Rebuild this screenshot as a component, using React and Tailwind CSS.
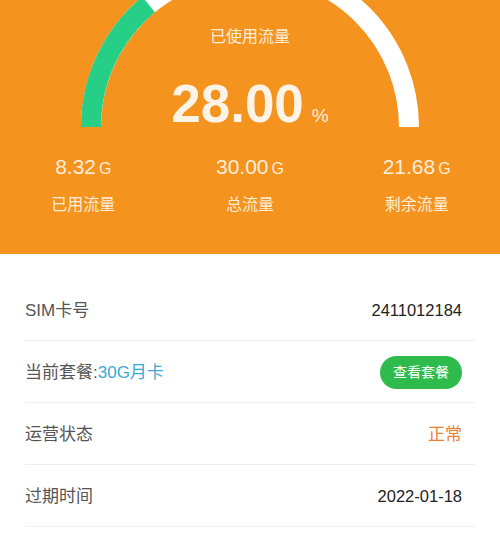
export default function App() {
  const font = { fontFamily: '"Liberation Sans", "Noto Sans CJK SC", sans-serif' };

  // gauge: centre (250,127), r 159, 28% of a half circle
  const pct = 28;
  const a = (pct / 100) * Math.PI;
  const gx = 250 - 159 * Math.cos(a);
  const gy = 127 - 159 * Math.sin(a);

  const stats = [
    { v: "8.32", l: "已用流量" },
    { v: "30.00", l: "总流量" },
    { v: "21.68", l: "剩余流量" },
  ];

  return (
    <div className="w-[500px] min-h-[533px] bg-white" style={font}>
      <div className="relative h-[254px] bg-[#F5931F] overflow-hidden text-[#FCEEDB]">
        <svg className="absolute left-0 top-0" width="500" height="140" viewBox="0 0 500 140">
          <path d="M 91 127 A 159 159 0 0 1 409 127" fill="none" stroke="#FFFFFF" strokeWidth="20" />
          <path d={`M 91 127 A 159 159 0 0 1 ${gx} ${gy}`} fill="none" stroke="#27CF86" strokeWidth="20" />
        </svg>
        <div className="relative flex flex-col items-center">
          <div className="mt-[26px] text-[16px] leading-[22px]">已使用流量</div>
          <div className="mt-[29px] flex items-baseline">
            <span className="text-[53px] leading-[53px] font-bold text-[#FDF3E6]">28.00</span>
            <span className="ml-[8px] text-[19px]">%</span>
          </div>
          <div className="mt-[24px] grid grid-cols-3 w-full">
            {stats.map((s) => (
              <div key={s.l} className="flex flex-col items-center">
                <div className="flex items-baseline text-[21px] leading-[24px]">
                  {s.v}
                  <span className="ml-[3px] text-[16px]">G</span>
                </div>
                <div className="mt-[13px] text-[16px] leading-[22px]">{s.l}</div>
              </div>
            ))}
          </div>
        </div>
      </div>

      <div className="pt-[25px] px-[25px]">
        <div className="h-[62px] flex items-center justify-between border-b border-[#EEEEEE] pr-[13px] pt-[2px]">
          <span className="text-[17px] text-[#555]">SIM卡号</span>
          <span className="text-[16.5px] text-[#222]">2411012184</span>
        </div>
        <div className="h-[62px] flex items-center justify-between border-b border-[#EEEEEE] pr-[13px] pt-[2px]">
          <span className="text-[17px] text-[#555]">
            当前套餐:<span className="text-[#3AA7D6]">30G月卡</span>
          </span>
          <button className="w-[82px] h-[33px] rounded-full bg-[#2EBB4C] text-white text-[14px]">
            查看套餐
          </button>
        </div>
        <div className="h-[62px] flex items-center justify-between border-b border-[#EEEEEE] pr-[13px] pt-[2px]">
          <span className="text-[17px] text-[#555]">运营状态</span>
          <span className="text-[17px] text-[#E8822F]">正常</span>
        </div>
        <div className="h-[62px] flex items-center justify-between border-b border-[#EEEEEE] pr-[13px] pt-[2px]">
          <span className="text-[17px] text-[#555]">过期时间</span>
          <span className="text-[16.5px] text-[#222]">2022-01-18</span>
        </div>
      </div>
    </div>
  );
}
